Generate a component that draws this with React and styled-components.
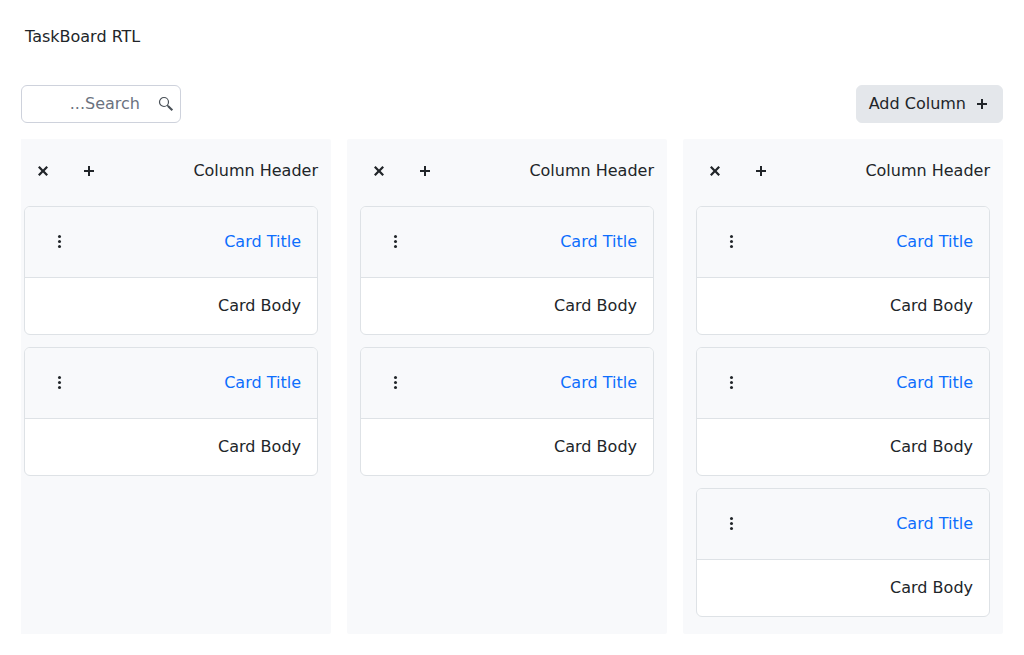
import React from "react";
import styled, { createGlobalStyle } from "styled-components";

const GlobalStyle = createGlobalStyle`
  *, *::before, *::after { box-sizing: border-box; }
  body {
    margin: 0;
    background: #fff;
    color: #212529;
    font: 16px/24px "DejaVu Sans", sans-serif;
    overflow: hidden;
  }
`;

const Page = styled.main`
  padding: 25px 21px 0;
`;

const Title = styled.div`
  padding: 0 4px;
  margin-bottom: 36px;
`;

const Board = styled.section`
  direction: rtl;
  display: flex;
  flex-direction: column;
  gap: 16px;
`;

const Toolbar = styled.header`
  display: flex;
  justify-content: space-between;
  height: 38px;
`;

const AddButton = styled.button`
  display: inline-flex;
  align-items: center;
  gap: 8px;
  padding: 6px 12px;
  border: 1px solid #e4e7eb;
  border-radius: 6px;
  background: #e4e7eb;
  color: inherit;
  font: inherit;
`;

const SearchBox = styled.label`
  display: flex;
  align-items: center;
  width: 160px;
  padding-right: 6px;
  border: 1px solid #ced2dc;
  border-radius: 6px;
  background: #fff;
  color: #495057;
`;

const SearchInput = styled.input`
  flex: 1;
  min-width: 0;
  padding: 6px 12px;
  padding-right: 18px;
  border: 0;
  outline: 0;
  background: none;
  font: inherit;
  &::placeholder { color: #6b7280; opacity: 1; }
`;

const Columns = styled.div`
  display: flex;
  gap: 16px;
  height: 495px;
  overflow: hidden;
`;

const Column = styled.article`
  flex: 0 0 320px;
  padding: 0 13px;
  border-radius: 2px;
  background: #f8f9fb;
`;

const ColumnHeader = styled.div`
  display: flex;
  align-items: center;
  justify-content: space-between;
  height: 64px;
  padding-left: 3px;
`;

const Actions = styled.div`
  display: flex;
  gap: 14px;
`;

const IconButton = styled.button`
  display: flex;
  align-items: center;
  justify-content: center;
  width: 32px;
  height: 32px;
  padding: 0;
  border: 0;
  background: none;
  color: inherit;
`;

const CardList = styled.div`
  display: flex;
  flex-direction: column;
  gap: 12px;
  padding-top: 3px;
`;

const Card = styled.div`
  border: 1px solid #dee2e6;
  border-radius: 6px;
  background: #fff;
  overflow: hidden;
`;

const CardHeader = styled.div`
  display: flex;
  align-items: center;
  justify-content: space-between;
  height: 71px;
  padding: 0 16px 0 18px;
  border-bottom: 1px solid #dee2e6;
  background: #f8f9fb;
`;

const CardTitle = styled.span`
  color: #0d6efd;
`;

const CardBody = styled.div`
  padding: 16px;
`;

const Svg = styled.svg`
  display: block;
  flex: none;
  width: 16px;
  height: 16px;
`;

const PlusIcon = () => (
  <Svg viewBox="0 0 16 16"><path d="M9 7V3H7v4H3v2h4v4h2V9h4V7z" fill="currentColor" /></Svg>
);

const CloseIcon = () => (
  <Svg viewBox="0 0 16 16"><path d="M13 4.6 11.4 3 8 6.4 4.6 3 3 4.6 6.4 8 3 11.4 4.6 13 8 9.6l3.4 3.4 1.6-1.6L9.6 8z" fill="currentColor" /></Svg>
);

const MoreIcon = () => (
  <Svg viewBox="0 0 16 16" fill="currentColor">
    <circle cx="8.5" cy="2.5" r="1.5" />
    <circle cx="8.5" cy="7.5" r="1.5" />
    <circle cx="8.5" cy="12.5" r="1.5" />
  </Svg>
);

const SearchIcon = () => (
  <Svg viewBox="0 0 16 16" fill="none" stroke="currentColor">
    <circle cx="6" cy="6" r="4.5" strokeWidth="1.2" />
    <path d="m9.1 9.1 1.5 1.5" strokeWidth="1.2" />
    <path d="m10 10 4.3 4.3" strokeWidth="2.1" />
  </Svg>
);

const columns = [3, 2, 2];

export default function App() {
  return (
    <>
      <GlobalStyle />
      <Page>
        <Title>TaskBoard RTL</Title>
        <Board>
          <Toolbar>
            <AddButton><PlusIcon />Add Column</AddButton>
            <SearchBox>
              <SearchIcon />
              <SearchInput placeholder="Search..." />
            </SearchBox>
          </Toolbar>
          <Columns>
            {columns.map((count, index) => (
              <Column key={index}>
                <ColumnHeader>
                  <span>Column Header</span>
                  <Actions>
                    <IconButton aria-label="Add card"><PlusIcon /></IconButton>
                    <IconButton aria-label="Close column"><CloseIcon /></IconButton>
                  </Actions>
                </ColumnHeader>
                <CardList>
                  {Array.from({ length: count }, (_, card) => (
                    <Card key={card}>
                      <CardHeader>
                        <CardTitle>Card Title</CardTitle>
                        <IconButton aria-label="Card menu"><MoreIcon /></IconButton>
                      </CardHeader>
                      <CardBody>Card Body</CardBody>
                    </Card>
                  ))}
                </CardList>
              </Column>
            ))}
          </Columns>
        </Board>
      </Page>
    </>
  );
}
